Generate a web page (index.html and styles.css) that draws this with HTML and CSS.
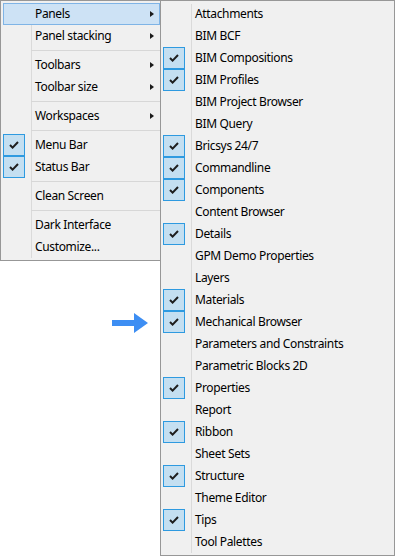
FILE: index.html
```html
<!DOCTYPE html>
<html>
<head>
<meta charset="utf-8">
<link rel="stylesheet" href="styles.css">
</head>
<body>
<div class="stage">
  <div class="menu main">
    <div class="item hot"><span class="chk"></span><span class="label">Panels</span><span class="sub"></span></div>
    <div class="item"><span class="chk"></span><span class="label">Panel stacking</span><span class="sub"></span></div>
    <div class="sep"></div>
    <div class="item"><span class="chk"></span><span class="label">Toolbars</span><span class="sub"></span></div>
    <div class="item"><span class="chk"></span><span class="label">Toolbar size</span><span class="sub"></span></div>
    <div class="sep"></div>
    <div class="item"><span class="chk"></span><span class="label">Workspaces</span><span class="sub"></span></div>
    <div class="sep"></div>
    <div class="item"><span class="chk on"><svg width="10" height="8" viewBox="0 0 10 8"><path d="M1 4 L3.6 6.6 L9 1" fill="none" stroke="#1e1e1e" stroke-width="2"/></svg></span><span class="label">Menu Bar</span></div>
    <div class="item"><span class="chk on"><svg width="10" height="8" viewBox="0 0 10 8"><path d="M1 4 L3.6 6.6 L9 1" fill="none" stroke="#1e1e1e" stroke-width="2"/></svg></span><span class="label">Status Bar</span></div>
    <div class="sep"></div>
    <div class="item"><span class="chk"></span><span class="label">Clean Screen</span></div>
    <div class="sep"></div>
    <div class="item"><span class="chk"></span><span class="label">Dark Interface</span></div>
    <div class="item"><span class="chk"></span><span class="label">Customize...</span></div>
  </div>

  <svg class="pointer" width="38" height="22" viewBox="0 0 38 22"><path d="M0 8 H22 V1 L36 11 L22 21 V14 H0 Z" fill="#3d8ef3"/></svg>

  <div class="menu panels">
    <div class="item"><span class="chk"></span><span class="label">Attachments</span></div>
    <div class="item"><span class="chk"></span><span class="label">BIM BCF</span></div>
    <div class="item"><span class="chk on"><svg width="10" height="8" viewBox="0 0 10 8"><path d="M1 4 L3.6 6.6 L9 1" fill="none" stroke="#1e1e1e" stroke-width="2"/></svg></span><span class="label">BIM Compositions</span></div>
    <div class="item"><span class="chk on"><svg width="10" height="8" viewBox="0 0 10 8"><path d="M1 4 L3.6 6.6 L9 1" fill="none" stroke="#1e1e1e" stroke-width="2"/></svg></span><span class="label">BIM Profiles</span></div>
    <div class="item"><span class="chk"></span><span class="label">BIM Project Browser</span></div>
    <div class="item"><span class="chk"></span><span class="label">BIM Query</span></div>
    <div class="item"><span class="chk on"><svg width="10" height="8" viewBox="0 0 10 8"><path d="M1 4 L3.6 6.6 L9 1" fill="none" stroke="#1e1e1e" stroke-width="2"/></svg></span><span class="label">Bricsys 24/7</span></div>
    <div class="item"><span class="chk on"><svg width="10" height="8" viewBox="0 0 10 8"><path d="M1 4 L3.6 6.6 L9 1" fill="none" stroke="#1e1e1e" stroke-width="2"/></svg></span><span class="label">Commandline</span></div>
    <div class="item"><span class="chk on"><svg width="10" height="8" viewBox="0 0 10 8"><path d="M1 4 L3.6 6.6 L9 1" fill="none" stroke="#1e1e1e" stroke-width="2"/></svg></span><span class="label">Components</span></div>
    <div class="item"><span class="chk"></span><span class="label">Content Browser</span></div>
    <div class="item"><span class="chk on"><svg width="10" height="8" viewBox="0 0 10 8"><path d="M1 4 L3.6 6.6 L9 1" fill="none" stroke="#1e1e1e" stroke-width="2"/></svg></span><span class="label">Details</span></div>
    <div class="item"><span class="chk"></span><span class="label">GPM Demo Properties</span></div>
    <div class="item"><span class="chk"></span><span class="label">Layers</span></div>
    <div class="item"><span class="chk on"><svg width="10" height="8" viewBox="0 0 10 8"><path d="M1 4 L3.6 6.6 L9 1" fill="none" stroke="#1e1e1e" stroke-width="2"/></svg></span><span class="label">Materials</span></div>
    <div class="item"><span class="chk on"><svg width="10" height="8" viewBox="0 0 10 8"><path d="M1 4 L3.6 6.6 L9 1" fill="none" stroke="#1e1e1e" stroke-width="2"/></svg></span><span class="label">Mechanical Browser</span></div>
    <div class="item"><span class="chk"></span><span class="label">Parameters and Constraints</span></div>
    <div class="item"><span class="chk"></span><span class="label">Parametric Blocks 2D</span></div>
    <div class="item"><span class="chk on"><svg width="10" height="8" viewBox="0 0 10 8"><path d="M1 4 L3.6 6.6 L9 1" fill="none" stroke="#1e1e1e" stroke-width="2"/></svg></span><span class="label">Properties</span></div>
    <div class="item"><span class="chk"></span><span class="label">Report</span></div>
    <div class="item"><span class="chk on"><svg width="10" height="8" viewBox="0 0 10 8"><path d="M1 4 L3.6 6.6 L9 1" fill="none" stroke="#1e1e1e" stroke-width="2"/></svg></span><span class="label">Ribbon</span></div>
    <div class="item"><span class="chk"></span><span class="label">Sheet Sets</span></div>
    <div class="item"><span class="chk on"><svg width="10" height="8" viewBox="0 0 10 8"><path d="M1 4 L3.6 6.6 L9 1" fill="none" stroke="#1e1e1e" stroke-width="2"/></svg></span><span class="label">Structure</span></div>
    <div class="item"><span class="chk"></span><span class="label">Theme Editor</span></div>
    <div class="item"><span class="chk on"><svg width="10" height="8" viewBox="0 0 10 8"><path d="M1 4 L3.6 6.6 L9 1" fill="none" stroke="#1e1e1e" stroke-width="2"/></svg></span><span class="label">Tips</span></div>
    <div class="item"><span class="chk"></span><span class="label">Tool Palettes</span></div>
  </div>
</div>
</body>
</html>
```

FILE: styles.css
```css
* { box-sizing: border-box; }
html, body { margin: 0; padding: 0; background: #ffffff; }
.stage {
  position: relative;
  width: 395px;
  height: 556px;
  overflow: hidden;
  font-family: "Noto Sans", "Open Sans", sans-serif;
  font-size: 12px;
  letter-spacing: -0.35px;
  color: #000;
}
.menu {
  position: relative;
  background: #f0f0f0;
  border: 1px solid #979797;
  padding: 2px;
}
.menu::before {
  content: "";
  position: absolute;
  left: 30px;
  top: 3px;
  bottom: 2px;
  width: 1px;
  background: #dadada;
}
.main {
  width: 163px;
  height: 261px;
}
.panels {
  position: absolute;
  left: 160px;
  top: 0;
  width: 235px;
  height: 556px;
  z-index: 2;
}
.item {
  position: relative;
  display: flex;
  align-items: center;
  height: 22px;
}
.item.hot {
  background: #cde2f5;
  box-shadow: inset 0 0 0 1px #7fb4e6;
  width: 157px;
}
.chk {
  width: 22px;
  height: 22px;
  flex: none;
  display: flex;
  align-items: center;
  justify-content: center;
}
.chk.on {
  background: #c4dff1;
  border: 1px solid #2e9ae0;
}
.chk svg { display: block; }
.label {
  margin-left: 10px;
  line-height: 22px;
  white-space: nowrap;
  flex: 1;
}
.sub {
  width: 0;
  height: 0;
  border-left: 4px solid #1a1a1a;
  border-top: 3.5px solid transparent;
  border-bottom: 3.5px solid transparent;
  margin-right: 6px;
}
.sep {
  height: 7px;
  position: relative;
}
.sep::after {
  content: "";
  position: absolute;
  left: 28px;
  right: 0;
  top: 3px;
  height: 1px;
  background: #d7d7d7;
}
.pointer {
  position: absolute;
  left: 112px;
  top: 312px;
}
```
